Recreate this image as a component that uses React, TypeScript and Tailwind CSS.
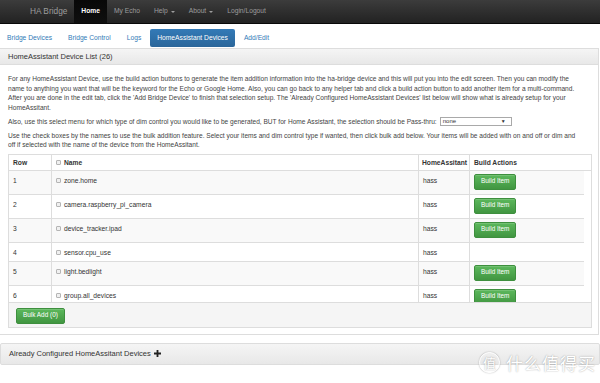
import React from "react";

type Device = {
  row: number;
  name: string;
  build: boolean;
};

const devices: Device[] = [
  { row: 1, name: "zone.home", build: true },
  { row: 2, name: "camera.raspberry_pi_camera", build: true },
  { row: 3, name: "device_tracker.ipad", build: true },
  { row: 4, name: "sensor.cpu_use", build: false },
  { row: 5, name: "light.bedlight", build: true },
  { row: 6, name: "group.all_devices", build: true },
];

const navLinks = ["My Echo", "Help", "About", "Login/Logout"];
const tabs = ["Bridge Devices", "Bridge Control", "Logs", "HomeAssistant Devices", "Add/Edit"];

function Caret() {
  return <span className="ml-[3px] inline-block border-x-[2px] border-t-[2px] border-x-transparent border-t-current align-middle" />;
}

function GreenButton({ children }: { children: React.ReactNode }) {
  return (
    <button
      type="button"
      className="h-[16px] px-[6px] rounded-[2px] border border-[#3e8f3e] bg-linear-to-b from-[#5cb85c] to-[#419641] text-white text-[6.4px] leading-none shadow-[inset_0_1px_0_rgba(255,255,255,0.15)]">
      {children}
    </button>
  );
}

function Checkbox() {
  return <span className="inline-block w-[5px] h-[5px] mr-[3px] border border-[#b5b5b5] bg-[#f0f0f0] rounded-[1px] align-[-0.5px]" />;
}

export default function App() {
  return (
    <div className="relative w-[600px] h-[383px] overflow-hidden bg-white text-[#333] font-['Liberation_Sans',Arial,sans-serif]">
      {/* top navbar */}
      <nav className="h-[24px] flex bg-linear-to-b from-[#3c3c3c] to-[#222] border-b border-[#080808] pl-[23px] text-[6.7px] text-[#9d9d9d]">
        <span className="px-[7px] flex items-center text-[8.3px]">HA Bridge</span>
        <span className="px-[7px] flex items-center bg-linear-to-b from-[#080808] to-[#0f0f0f] text-white font-bold">Home</span>
        {navLinks.map(link => (
          <span key={link} className="px-[7px] flex items-center">
            {link}
            {(link === "Help" || link === "About") && <Caret />}
          </span>
        ))}
      </nav>

      {/* tabs */}
      <div className="flex gap-[2px] mt-[5px] mb-[1px] text-[6.7px]">
        {tabs.map(tab =>
          tab === "HomeAssistant Devices" ? (
            <span
              key={tab}
              className="h-[18px] px-[7px] flex items-center rounded-[2px] bg-linear-to-b from-[#337ab7] to-[#2b669a] text-white">
              {tab}
            </span>
          ) : (
            <span key={tab} className="h-[18px] px-[7px] flex items-center text-[#337ab7]">
              {tab}
            </span>
          ),
        )}
      </div>

      {/* device list panel */}
      <div className="w-[599px] border border-[#ddd] border-l-0">
        <div className="h-[16px] px-[8px] flex items-center bg-linear-to-b from-[#f5f5f5] to-[#e8e8e8] border-b border-[#ddd] text-[7.5px]">
          HomeAssistant Device List (26)
        </div>
        <div className="pt-[9px] px-[8px] pb-[6px] text-[6.6px] leading-[9.5px] text-[#444]">
          <p className="mb-[4.5px] pr-[14px]">
            For any HomeAssistant Device, use the build action buttons to generate the item addition information into the
            ha-bridge device and this will put you into the edit screen. Then you can modify the name to anything you want
            that will be the keyword for the Echo or Google Home. Also, you can go back to any helper tab and click a build
            action button to add another item for a multi-command. After you are done in the edit tab, click the 'Add
            Bridge Device' to finish that selection setup. The 'Already Configured HomeAssistant Devices' list below will
            show what is already setup for your HomeAssitant.
          </p>
          <p className="mb-[4.5px] flex items-center">
            Also, use this select menu for which type of dim control you would like to be generated, BUT for Home
            Assistant, the selection should be Pass-thru:
            <span className="ml-[3px] w-[72px] h-[9px] px-[2px] flex items-center justify-between border border-[#a9a9a9] bg-white text-[6px] text-[#333]">
              none
              <span className="text-[5px] pr-[3px]">▼</span>
            </span>
          </p>
          <p className="mb-[4px] pr-[14px]">
            Use the check boxes by the names to use the bulk addition feature. Select your items and dim control type if
            wanted, then click bulk add below. Your items will be added with on and off or dim and off if selected with the
            name of the device from the HomeAssitant.
          </p>

          {/* table with scroll body */}
          <div className="w-[584px] border border-[#ddd] text-[6.7px] leading-[11px] text-[#333]">
            <div className="flex border-b border-[#ddd] font-bold">
              <div className="w-[43px] px-[4px] py-[2px] border-r border-[#ddd]">Row</div>
              <div className="w-[367px] px-[4px] py-[2px] border-r border-[#ddd]">
                <Checkbox />
                Name
              </div>
              <div className="w-[51px] pl-[3px] py-[2px] border-r border-[#ddd] whitespace-nowrap">HomeAssitant</div>
              <div className="flex-1 px-[4px] py-[2px]">Build Actions</div>
            </div>
            <div className="h-[131px] overflow-hidden pr-[7px]">
              {devices.map(d => (
                <div
                  key={d.row}
                  className={`flex border-b border-[#ddd] ${d.row % 2 === 1 ? "bg-[#f9f9f9]" : "bg-white"}`}>
                  <div className="w-[43px] px-[4px] pt-[4px] pb-[3px] border-r border-[#ddd]">{d.row}</div>
                  <div className="w-[367px] px-[4px] pt-[4px] pb-[3px] border-r border-[#ddd]">
                    <Checkbox />
                    {d.name}
                  </div>
                  <div className="w-[51px] px-[4px] pt-[4px] pb-[3px] border-r border-[#ddd]">hass</div>
                  <div className="flex-1 px-[4px] pt-[3px] pb-[4px] min-h-[18px]">
                    {d.build && <GreenButton>Build Item</GreenButton>}
                  </div>
                </div>
              ))}
            </div>
            <div className="h-[25px] px-[7px] pt-[5px] bg-[#f5f5f5] border-t border-[#ddd]">
              <GreenButton>Bulk Add (0)</GreenButton>
            </div>
          </div>
        </div>
      </div>

      {/* configured devices panel */}
      <div className="mt-[8px] w-[600px] h-[22px] px-[8px] flex items-center gap-[2px] border border-[#ddd] rounded-[2px] bg-linear-to-b from-[#f5f5f5] to-[#e8e8e8] text-[7.5px]">
        Already Configured HomeAssitant Devices
        <svg width="7" height="7" viewBox="0 0 10 10" className="ml-[1px]">
          <path d="M3.7 0h2.6v3.7H10v2.6H6.3V10H3.7V6.3H0V3.7h3.7z" fill="#222" />
        </svg>
      </div>

      {/* watermark */}
      <div className="absolute right-[4px] bottom-[10px] flex items-center gap-[6px] text-white [text-shadow:0_0_1.5px_rgba(0,0,0,0.4)] font-['Noto_Sans_CJK_SC',sans-serif]">
        <span className="w-[21px] h-[21px] rounded-full border-[1.5px] border-white shadow-[0_0_1.5px_rgba(0,0,0,0.4)] flex items-center justify-center text-[13px] leading-none">
          值
        </span>
        <span className="text-[17px] leading-none tracking-[1px]">什么值得买</span>
      </div>
    </div>
  );
}
